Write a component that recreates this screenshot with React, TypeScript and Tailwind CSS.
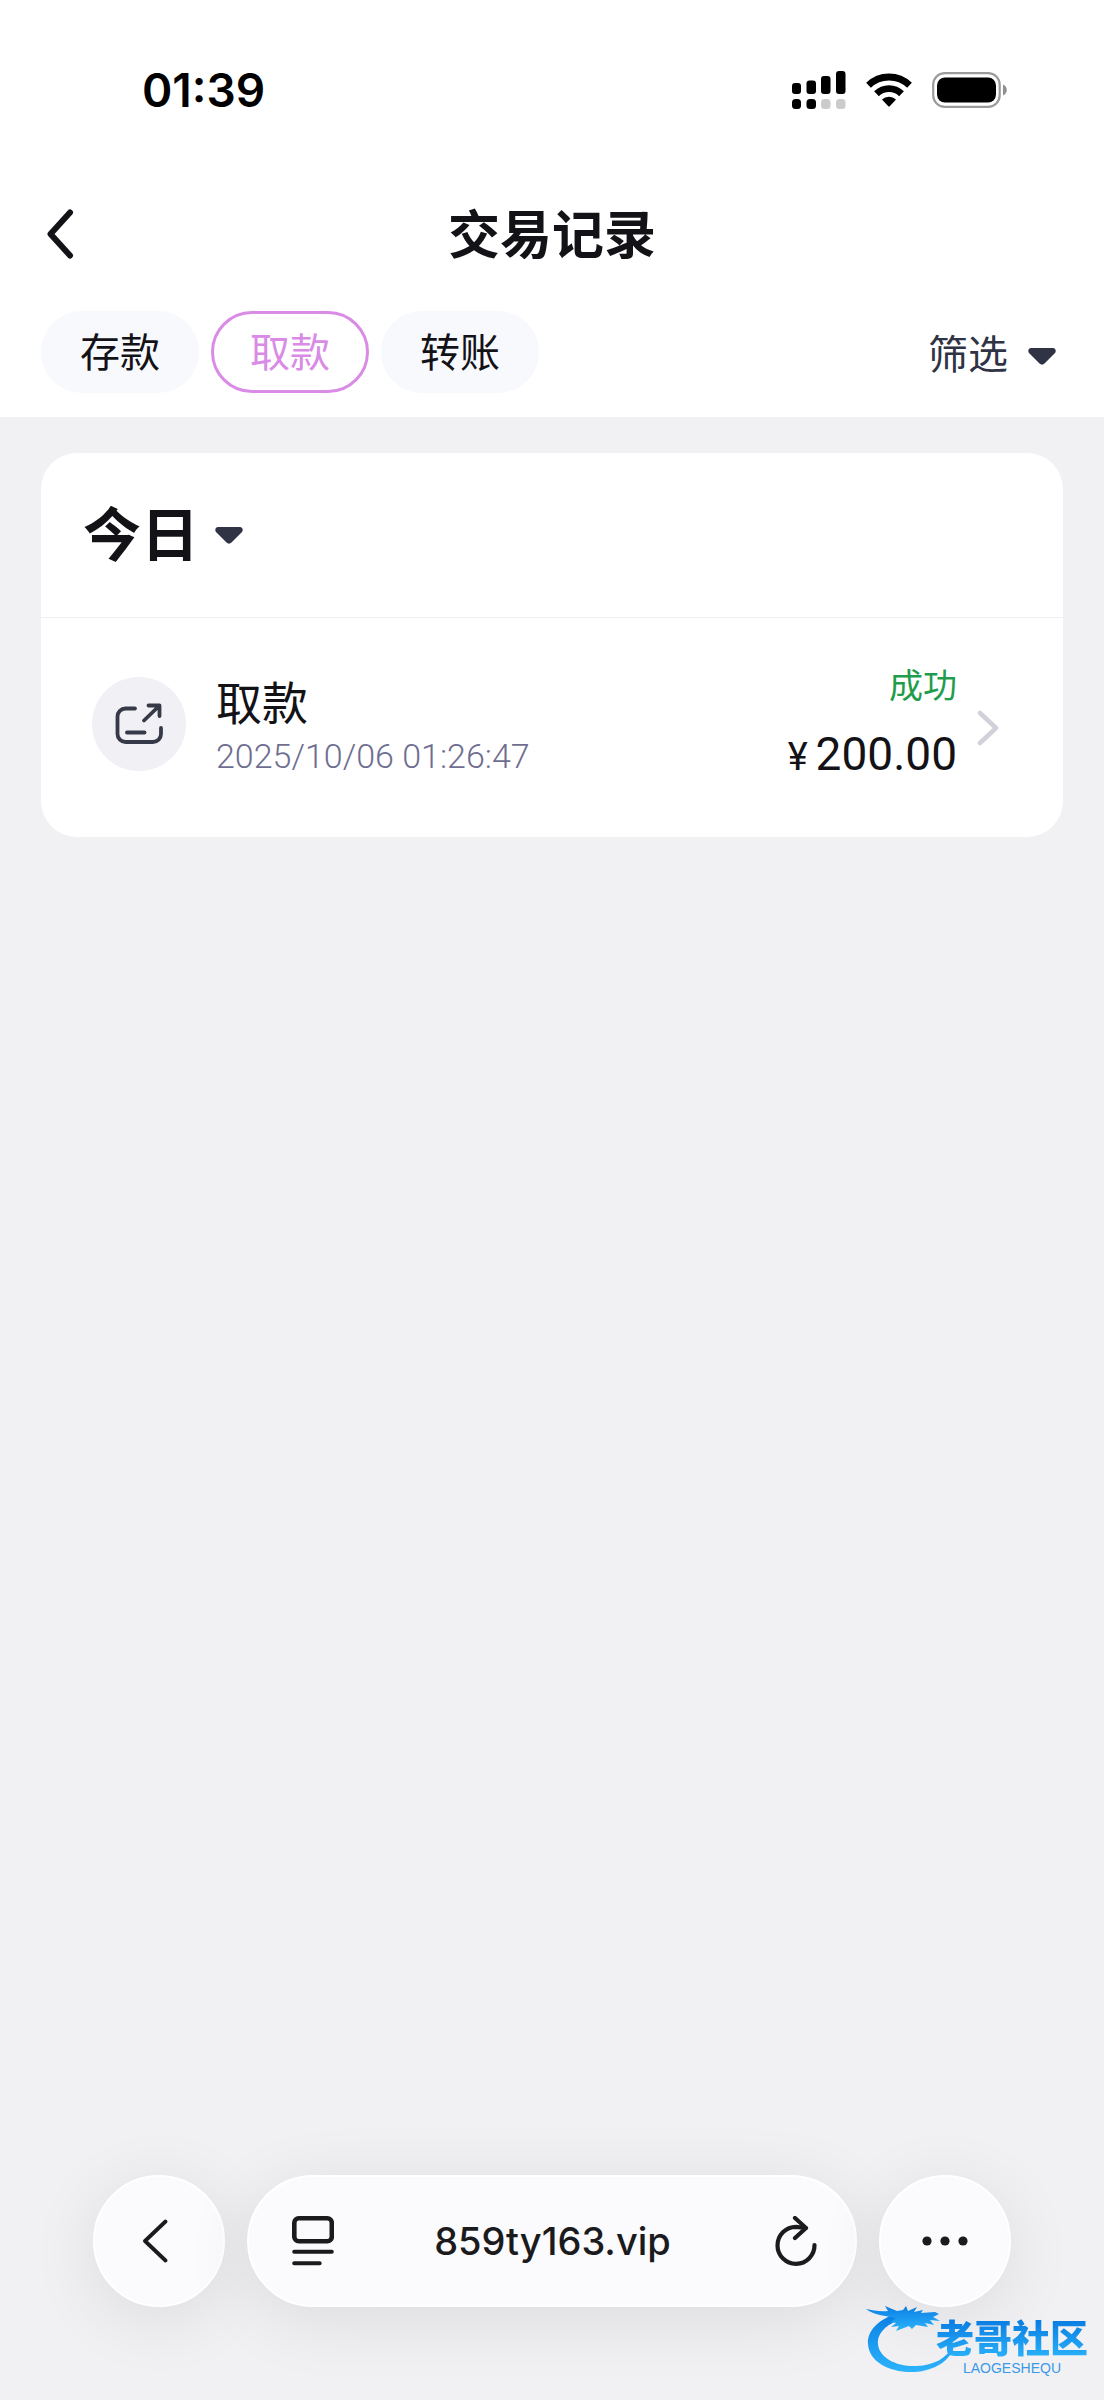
import React, { useState } from 'react';

interface Transaction {
  id: number;
  type: string;
  time: string;
  status: string;
  amount: string;
}

const tabs = ['存款', '取款', '转账'];

const transactions: Transaction[] = [
  { id: 1, type: '取款', time: '2025/10/06 01:26:47', status: '成功', amount: '200.00' },
];

const SignalIcon = () => (
  <svg width="54" height="38" viewBox="0 0 54 38" aria-hidden="true">
    <rect x="0" y="12" width="9" height="11" rx="3" />
    <rect x="14.500" y="9.500" width="9.500" height="13.500" rx="3" />
    <rect x="29" y="5" width="9.500" height="18" rx="3" />
    <rect x="44" y="0" width="9.500" height="23" rx="3" />
    <rect x="0" y="28" width="9" height="10" rx="3.500" />
    <rect x="14.500" y="28" width="9.500" height="10" rx="3.500" />
    <rect x="29" y="28" width="9.500" height="10" rx="3.500" fill="#cbcbcb" />
    <rect x="44" y="28" width="9.500" height="10" rx="3.500" fill="#cbcbcb" />
  </svg>
);

const WifiIcon = () => (
  <svg width="46" height="34" viewBox="0 0 46 34" aria-hidden="true">
    <g fill="none" stroke="#000" strokeWidth="6.800">
      <path d="M2.500 12.300a29.500 29.500 0 0 1 41 0" />
      <path d="M10.500 20.700a18 18 0 0 1 25 0" />
    </g>
    <path d="M16 26.500a10 10 0 0 1 14 0l-6.300 6.800a1 1 0 0 1-1.400 0z" />
  </svg>
);

const BatteryIcon = () => (
  <svg width="76" height="36" viewBox="0 0 76 36" aria-hidden="true">
    <rect x="1.200" y="1.200" width="66.500" height="33.600" rx="11.500" fill="none" stroke="#9b9b9b" strokeWidth="2.200" />
    <rect x="5" y="5.500" width="59" height="25" rx="8" />
    <path d="M71 12.500c5 2 5 9 0 11z" fill="#8f8f8f" />
  </svg>
);

const Caret = () => (
  <svg width="28" height="17" viewBox="0 0 28 17" aria-hidden="true">
    <path
      d="M3 0h22c2.500 0 3.500 3 2 5L16.500 15.500c-1.500 1.500-3.500 1.500-5 0L1 5C-.5 3 .5 0 3 0z"
      fill="#2f3344"
    />
  </svg>
);

const WithdrawIcon = () => (
  <svg
    width="48"
    height="42"
    viewBox="0 0 48 42"
    fill="none"
    stroke="#363a48"
    strokeWidth="3.800"
    strokeLinecap="round"
    strokeLinejoin="round"
    aria-hidden="true"
  >
    <path d="M20 5.500h-9.500a8 8 0 0 0-8 8V31a8 8 0 0 0 8 8h27.500a8 8 0 0 0 8-8v-6" />
    <path d="M12 29.500h17.500" />
    <path d="M29 17.500 43.500 3.500M33.500 2.500h11v10.500" />
  </svg>
);

const ReaderIcon = () => (
  <svg width="42" height="50" viewBox="0 0 42 50" fill="none" stroke="#1b1b1d" strokeWidth="4" strokeLinecap="round" aria-hidden="true">
    <rect x="2.300" y="2.300" width="37.500" height="23" rx="4.500" strokeWidth="4.600" />
    <path d="M2.200 35.700h37.600M2.200 47.300h25.500" />
  </svg>
);

const ReloadIcon = () => (
  <svg
    width="42"
    height="50"
    viewBox="0 0 42 50"
    fill="none"
    stroke="#1b1b1d"
    strokeWidth="4.200"
    strokeLinecap="round"
    strokeLinejoin="round"
    aria-hidden="true"
  >
    <path d="M39.500 29A18.500 18.500 0 1 1 21 10.800l9.500 1.200" />
    <path d="M20 2l11 10L20 22" />
  </svg>
);

// Site logo: dragon ring, name and latin caption
const SiteMark = () => (
  <div className="pointer-events-none absolute right-4 bottom-6 flex h-[72px] items-start">
    <svg className="-mr-5" width="90" height="72" viewBox="0 0 90 72" aria-hidden="true">
      <defs>
        <linearGradient id="ring" x1="0" y1="0" x2="0" y2="1">
          <stop offset="0" stopColor="#0a7fe4" />
          <stop offset="1" stopColor="#2cb4fb" />
        </linearGradient>
      </defs>
      <g fill="url(#ring)">
        <path d="M29 10C12 16 1 27 2 40c1 18 22 29 46 28 22-1 38-13 40-27-8 14-20 20-37 21-20 1-38-8-39-22-1-11 9-20 22-24z" />
        <path d="M0 5c7 1 13 3 22 2l-3-5 12 5 6-1 3-4 2 5 9-4-3 5 9-2-2 3 14-1 4 2-6 3 7 4-10-1 4 5-9-2 3 4-12-2-4 4-3-3-13 5 3-5-8 1 5-4-5-1 5-4C16 11 8 11 0 5z" />
      </g>
    </svg>
    <div className="flex flex-col items-center pt-2">
      <span className="bg-gradient-to-b from-[#0671dc] to-[#2cb4fb] bg-clip-text text-[38px] leading-[48px] font-black text-transparent">
        老哥社区
      </span>
      <span className="font-['Liberation_Sans',sans-serif] text-[14px] leading-[16px] text-[#3a9ae8]">
        LAOGESHEQU
      </span>
    </div>
  </div>
);

const TransactionRow: React.FC<{ item: Transaction }> = ({ item }) => (
  <li>
    <button type="button" className="flex w-full items-center pt-10 pr-16 pb-12 pl-[51px] text-left">
      <span className="flex h-[94px] w-[94px] shrink-0 items-center justify-center rounded-full bg-[#f0f0f5]">
        <WithdrawIcon />
      </span>
      <span className="ml-[30px] flex flex-1 flex-col pt-1">
        <span className="text-[46px] leading-[60px] text-[#131217]">{item.type}</span>
        <span className="font-['Roboto',sans-serif] text-[34px] leading-[52px] font-light text-[#6f6e91]">{item.time}</span>
      </span>
      <span className="flex flex-col items-end">
        <span className="text-[34px] leading-[52px] text-[#1f9d4c]">{item.status}</span>
        <span className="pt-3 font-['Roboto',sans-serif] text-[46px] leading-[64px] text-[#131217]">
          <span className="mr-2 text-[38px]">¥</span>
          {item.amount}
        </span>
      </span>
      <svg className="ml-5 mt-2" width="22" height="36" viewBox="0 0 22 36" fill="none" stroke="#d1d1dc" strokeWidth="4.500" strokeLinecap="round" strokeLinejoin="round" aria-hidden="true">
        <path d="M3 3l16 15L3 33" />
      </svg>
    </button>
  </li>
);

const App: React.FC = () => {
  const [activeTab, setActiveTab] = useState('取款');

  return (
    <div className="flex min-h-screen flex-col bg-[#f1f1f4] font-['Noto_Sans_CJK_SC',sans-serif]">
      <header className="bg-white pb-6">
        {/* Status bar */}
        <div className="flex items-center justify-between pt-[60px] pr-24 pl-[142px]">
          <span className="font-['Inter',sans-serif] text-[46px] leading-[60px] font-semibold text-black">01:39</span>
          <div className="flex items-center gap-5">
            <SignalIcon />
            <WifiIcon />
            <BatteryIcon />
          </div>
        </div>

        {/* Title */}
        <div className="flex items-center px-[46px] pt-[76px]">
          <button type="button" aria-label="返回" className="w-12 pt-1">
            <svg width="28" height="50" viewBox="0 0 28 50" fill="none" stroke="#131217" strokeWidth="6" strokeLinecap="round" strokeLinejoin="round">
              <path d="M24 3.500 4.500 25 24 46.500" />
            </svg>
          </button>
          <h1 className="flex-1 text-center text-[52px] leading-[72px] font-bold text-[#131217]">交易记录</h1>
          <span className="w-12" />
        </div>

        {/* Tabs */}
        <div className="flex items-center justify-between pt-[43px] pr-12 pl-[41px]">
          <div className="flex gap-3">
            {tabs.map((tab) => (
              <button
                key={tab}
                type="button"
                aria-pressed={tab === activeTab}
                onClick={() => setActiveTab(tab)}
                className={`rounded-full border-3 px-9 pt-1.5 pb-2.5 text-[40px] leading-[60px] ${
                  tab === activeTab
                    ? 'border-[#d98be6] bg-white text-[#d98be6]'
                    : 'border-[#f8f9fd] bg-[#f8f9fd] text-[#131217]'
                }`}
              >
                {tab}
              </button>
            ))}
          </div>
          <button type="button" className="flex items-center gap-5 text-[40px] leading-[60px] text-[#2f3344]">
            筛选
            <span className="pt-2">
              <Caret />
            </span>
          </button>
        </div>
      </header>

      <main className="flex-1 px-[41px] pt-9">
        <section className="rounded-[36px] bg-white">
          <div className="border-b border-[#f0f0f2] px-[42px] pt-9 pb-11">
            <button type="button" className="flex items-center gap-4 text-[58px] leading-[84px] font-bold text-[#131217]">
              今日
              <span className="pt-2">
                <Caret />
              </span>
            </button>
          </div>
          <ul>
            {transactions.map((item) => (
              <TransactionRow key={item.id} item={item} />
            ))}
          </ul>
        </section>
      </main>

      {/* Browser toolbar */}
      <footer className="relative flex gap-[22px] px-[93px] pb-[93px]">
        <button
          type="button"
          aria-label="后退"
          className="flex h-[132px] w-[132px] shrink-0 items-center justify-center rounded-full border-2 border-white bg-[#fbfbfd] pr-2 shadow-[0_12px_70px_rgba(0,0,0,0.09)]"
        >
          <svg width="26" height="44" viewBox="0 0 26 44" fill="none" stroke="#1b1b1d" strokeWidth="3.800" strokeLinecap="round" strokeLinejoin="round">
            <path d="M23.500 2.500 3 22l20.500 19.500" />
          </svg>
        </button>
        <div className="flex h-[132px] flex-1 items-center justify-between rounded-full border-2 border-white bg-[#fbfbfd] pr-[38px] pl-[43px] shadow-[0_12px_70px_rgba(0,0,0,0.09)]">
          <button type="button" aria-label="阅读模式">
            <ReaderIcon />
          </button>
          <button type="button" className="pr-1 font-['Inter',sans-serif] text-[38px] leading-[48px] font-medium text-[#1b1b1d]">
            859ty163.vip
          </button>
          <button type="button" aria-label="刷新">
            <ReloadIcon />
          </button>
        </div>
        <button
          type="button"
          aria-label="更多"
          className="flex h-[132px] w-[132px] shrink-0 items-center justify-center rounded-full border-2 border-white bg-[#fbfbfd] shadow-[0_12px_70px_rgba(0,0,0,0.09)]"
        >
          <svg width="46" height="10" viewBox="0 0 46 10" fill="#1b1b1d">
            <circle cx="5" cy="5" r="4.600" />
            <circle cx="23" cy="5" r="4.600" />
            <circle cx="41" cy="5" r="4.600" />
          </svg>
        </button>
        <SiteMark />
      </footer>
    </div>
  );
};

export default App;
